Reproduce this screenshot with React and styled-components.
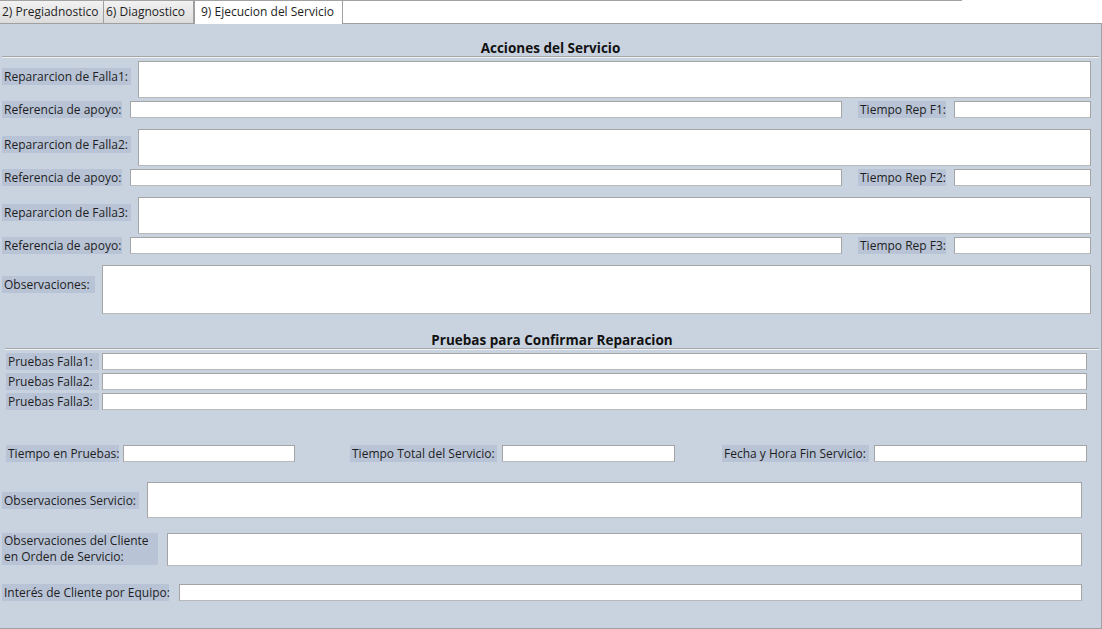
import styled, { createGlobalStyle } from "styled-components";

const Global = createGlobalStyle`
  body {
    margin: 0;
    background: #fff;
    font-family: "Open Sans", "Noto Sans", "Liberation Sans", sans-serif;
    font-size: 12px;
    color: #1e1e1e;
  }
`;

const Page = styled.div`
  width: 1102px;
  height: 629px;
  overflow: hidden;
`;

const TabStrip = styled.div`
  width: 962px;
  height: 23px;
  border-top: 1px solid #a3a3a3;
  box-sizing: border-box;
  display: flex;
  align-items: stretch;
`;

const Tab = styled.div`
  position: relative;
  z-index: 1;
  width: ${(p) => p.w}px;
  box-sizing: border-box;
  padding-left: ${(p) => (p.active ? 6 : 2)}px;
  line-height: 21px;
  white-space: nowrap;
  border-right: 1px solid #a0a0a0;
  border-left: ${(p) => (p.active ? "1px solid #a0a0a0" : "none")};
  background: ${(p) =>
    p.active ? "#fff" : "linear-gradient(#f2f2f2, #dcdcdc)"};
  margin-bottom: ${(p) => (p.active ? "-1px" : "0")};
  height: ${(p) => (p.active ? 23 : 22)}px;
`;

const Panel = styled.div`
  width: 1102px;
  height: 606px;
  box-sizing: border-box;
  background: #c9d3df;
  border: 1px solid #a0a0a0;
  border-left: none;
  overflow: hidden;
`;

const SectionTitle = styled.div`
  margin: ${(p) => p.mt}px 2px 0 ${(p) => p.ml}px;
  height: 16px;
  line-height: 16px;
  text-align: center;
  font-weight: 700;
  font-size: 13.5px;
  color: #111;
  border-bottom: 1px solid #a6a6a6;
  box-shadow: 0 1px 0 #eef1f5;
`;

const Row = styled.div`
  display: flex;
  align-items: ${(p) => (p.center ? "center" : "flex-start")};
  margin-top: ${(p) => p.mt}px;
`;

const Label = styled.div`
  width: ${(p) => p.w}px;
  margin-left: ${(p) => p.ml || 0}px;
  margin-top: ${(p) => p.top || 0}px;
  box-sizing: border-box;
  padding-left: 2px;
  background: #b8c3d5;
  line-height: ${(p) => (p.tall ? 16 : 17)}px;
  white-space: nowrap;
  flex-shrink: 0;
`;

const Field = styled.div`
  width: ${(p) => p.w}px;
  height: ${(p) => p.h || 17}px;
  margin-left: ${(p) => p.ml}px;
  box-sizing: border-box;
  background: #fff;
  border: 1px solid #a4a4a4;
  border-bottom-color: #b9b9b9;
  flex-shrink: 0;
`;

const fallas = ["1", "2", "3"];

export default function App() {
  return (
    <Page>
      <Global />
      <TabStrip>
        <Tab w={104}>2) Pregiadnostico</Tab>
        <Tab w={90}>6) Diagnostico</Tab>
        <Tab w={149} active>
          9) Ejecucion del Servicio
        </Tab>
      </TabStrip>
      <Panel>
        <SectionTitle mt={16} ml={2}>
          Acciones del Servicio
        </SectionTitle>

        {fallas.map((n, i) => (
          <div key={n}>
            <Row mt={i === 0 ? 4 : 11}>
              <Label w={129} ml={2} top={7}>
                Repararcion de Falla{n}:
              </Label>
              <Field w={953} h={37} ml={7} />
            </Row>
            <Row mt={3}>
              <Label w={120} ml={2}>
                Referencia de apoyo:
              </Label>
              <Field w={712} ml={8} />
              <Label w={88} ml={16}>
                Tiempo Rep F{n}:
              </Label>
              <Field w={137} ml={8} />
            </Row>
          </div>
        ))}

        <Row mt={11}>
          <Label w={93} ml={2} top={11}>
            Observaciones:
          </Label>
          <Field w={989} h={49} ml={7} />
        </Row>

        <SectionTitle mt={18} ml={5}>
          Pruebas para Confirmar Reparacion
        </SectionTitle>

        {fallas.map((n, i) => (
          <Row key={n} mt={i === 0 ? 4 : 3}>
            <Label w={93} ml={6}>
              Pruebas Falla{n}:
            </Label>
            <Field w={985} ml={3} />
          </Row>
        ))}

        <Row mt={35}>
          <Label w={113} ml={6}>
            Tiempo en Pruebas:
          </Label>
          <Field w={172} ml={4} />
          <Label w={147} ml={55}>
            Tiempo Total del Servicio:
          </Label>
          <Field w={173} ml={5} />
          <Label w={147} ml={47}>
            Fecha y Hora Fin Servicio:
          </Label>
          <Field w={213} ml={5} />
        </Row>

        <Row mt={20} center>
          <Label w={137} ml={2}>
            Observaciones Servicio:
          </Label>
          <Field w={935} h={36} ml={8} />
        </Row>

        <Row mt={15}>
          <Label w={156} ml={2} tall>
            Observaciones del Cliente
            <br />
            en Orden de Servicio:
          </Label>
          <Field w={915} h={33} ml={9} />
        </Row>

        <Row mt={18}>
          <Label w={167} ml={2}>
            Interés de Cliente por Equipo:
          </Label>
          <Field w={903} ml={10} />
        </Row>
      </Panel>
    </Page>
  );
}
